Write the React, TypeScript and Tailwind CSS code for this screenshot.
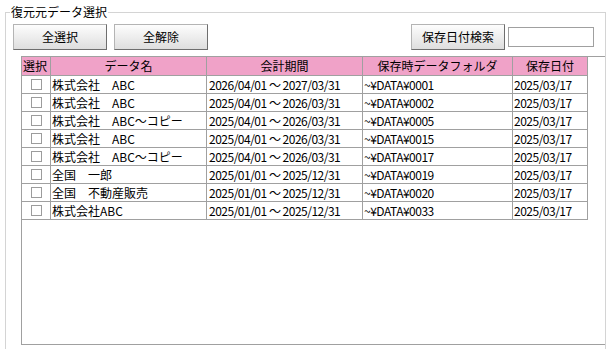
import React from "react";

type BackupRow = {
    name: string;
    period: string;
    folder: string;
    savedAt: string;
};

const rows: Array<BackupRow> = [
    { name: "株式会社　ABC", period: "2026/04/01 ～ 2027/03/31", folder: "~¥DATA¥0001", savedAt: "2025/03/17" },
    { name: "株式会社　ABC", period: "2025/04/01 ～ 2026/03/31", folder: "~¥DATA¥0002", savedAt: "2025/03/17" },
    { name: "株式会社　ABC～コピー", period: "2025/04/01 ～ 2026/03/31", folder: "~¥DATA¥0005", savedAt: "2025/03/17" },
    { name: "株式会社　ABC", period: "2025/04/01 ～ 2026/03/31", folder: "~¥DATA¥0015", savedAt: "2025/03/17" },
    { name: "株式会社　ABC～コピー", period: "2025/04/01 ～ 2026/03/31", folder: "~¥DATA¥0017", savedAt: "2025/03/17" },
    { name: "全国　一郎", period: "2025/01/01 ～ 2025/12/31", folder: "~¥DATA¥0019", savedAt: "2025/03/17" },
    { name: "全国　不動産販売", period: "2025/01/01 ～ 2025/12/31", folder: "~¥DATA¥0020", savedAt: "2025/03/17" },
    { name: "株式会社ABC", period: "2025/01/01 ～ 2025/12/31", folder: "~¥DATA¥0033", savedAt: "2025/03/17" },
];

const cols = "grid grid-cols-[29px_156px_156px_150px_75px] w-[566px]";
const cell = "border-r border-b border-[#a0a0a0] overflow-hidden whitespace-nowrap";
const head = `${cell} bg-[#f0a2c8]`;
const mono = "tracking-[-0.5px]";

const WinButton: React.FC<{ label: string; className?: string }> = ({
    label,
    className,
}) => (
    <button
        className={`h-[26px] border border-[#b4b4b4] border-r-[#6e6e6e] border-b-[#6e6e6e] bg-gradient-to-b from-[#fdfdfd] to-[#dedede] text-[12px] leading-[16px] text-black ${className ?? ""}`}
    >
        {label}
    </button>
);

const App: React.FC = () => {
    return (
        <div
            className="w-[612px] h-[349px] overflow-hidden bg-white pl-[5px] pt-[12px] text-black"
            style={{ fontFamily: '"Noto Sans CJK JP", "Noto Sans", sans-serif' }}
        >
            <div className="relative w-[601px] h-[360px] border border-[#d4d4d4] pl-[7px] pt-[11px]">
                <span className="absolute left-[4px] -top-[9px] bg-white px-[1px] text-[12px] leading-[16px]">
                    復元元データ選択
                </span>

                <div className="flex items-start pr-[11px]">
                    <WinButton label="全選択" className="w-[94px]" />
                    <WinButton label="全解除" className="w-[94px] ml-[7px]" />
                    <WinButton label="保存日付検索" className="w-[94px] ml-auto h-[25px]" />
                    <input
                        className="ml-[3px] mt-[3px] w-[86px] h-[20px] border border-[#a0a0a0] bg-white outline-none"
                        type="text"
                    />
                </div>

                <div className="ml-[8px] mt-[6px] h-[289px] border-l border-t border-b border-[#a0a0a0] text-[12px]">
                    <div className={`${cols} h-[19px] leading-[18px]`}>
                        <div className={`${head} pl-[1px]`}>選択</div>
                        <div className={`${head} text-center`}>データ名</div>
                        <div className={`${head} text-center`}>会計期間</div>
                        <div className={`${head} text-center`}>保存時データフォルダ</div>
                        <div className={`${head} text-center`}>保存日付</div>
                    </div>
                    {rows.map((row, i) => (
                        <div key={i} className={`${cols} h-[18px] leading-[17px]`}>
                            <div className={`${cell} flex items-center justify-center`}>
                                <span className="w-[11px] h-[11px] border border-[#9c9c9c] bg-white" />
                            </div>
                            <div className={`${cell} pl-[1px]`}>{row.name}</div>
                            <div className={`${cell} pl-[2px] ${mono}`}>{row.period}</div>
                            <div className={`${cell} pl-[1px] ${mono}`}>{row.folder}</div>
                            <div className={`${cell} pl-[1px] ${mono}`}>{row.savedAt}</div>
                        </div>
                    ))}
                </div>
            </div>
        </div>
    );
};

export default App;
